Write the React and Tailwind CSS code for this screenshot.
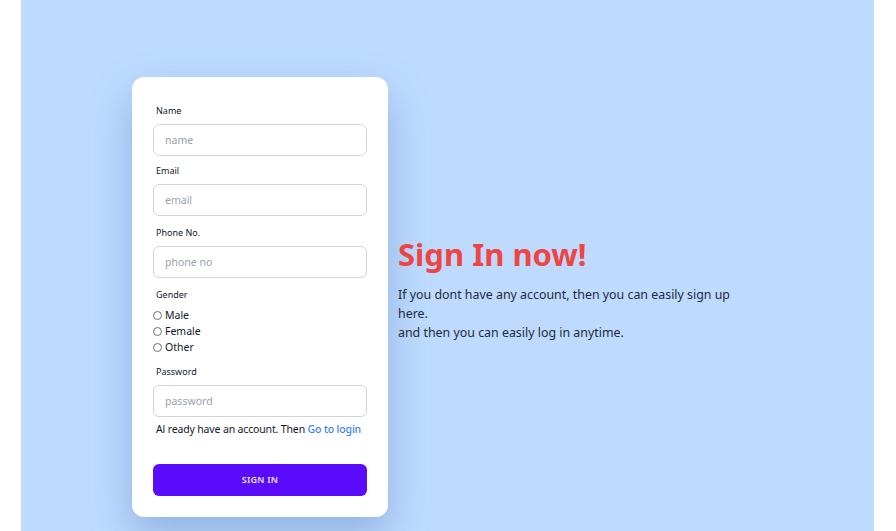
import React from "react";

function Field({ label, placeholder, type = "text" }) {
  return (
    <div className="flex flex-col">
      <label className="ml-[3px] text-[9px] leading-[12px] text-gray-900">{label}</label>
      <input
        type={type}
        placeholder={placeholder}
        className="mt-[7px] h-[32px] w-full rounded-md border border-gray-300 bg-white px-[11px] text-[10.5px] text-gray-800 placeholder:text-gray-400 outline-none"
      />
    </div>
  );
}

function Radio({ label }) {
  return (
    <label className="flex h-[16px] items-center gap-[3px] text-[10.5px] leading-[16px] text-gray-900">
      <span className="inline-block h-[9px] w-[9px] rounded-full border border-gray-500 bg-white" />
      {label}
    </label>
  );
}

export default function App() {
  return (
    <div className="flex w-full bg-white" style={{ fontFamily: '"Noto Sans", "Open Sans", sans-serif' }}>
      <div className="ml-[21px] flex h-[531px] w-[853px] items-start bg-[#bedbff] pl-[111px] pt-[77px]">
        <div className="flex w-[256px] flex-col rounded-xl bg-white px-[21px] pb-[21px] pt-[28px] shadow-[0_18px_40px_rgba(60,100,170,0.35)]">
          <Field label="Name" placeholder="name" />
          <div className="mt-[9px]">
            <Field label="Email" placeholder="email" />
          </div>
          <div className="mt-[11px]">
            <Field label="Phone No." placeholder="phone no" />
          </div>
          <div className="mt-[11px] flex flex-col">
            <span className="ml-[3px] text-[9px] leading-[12px] text-gray-900">Gender</span>
            <div className="mt-[6px] flex flex-col">
              <Radio label="Male" />
              <Radio label="Female" />
              <Radio label="Other" />
            </div>
          </div>
          <div className="mt-[11px]">
            <Field label="Password" placeholder="password" type="password" />
          </div>
          <p className="ml-[3px] mt-[4px] whitespace-nowrap text-[10.5px] leading-[16px] tracking-[-0.15px] text-gray-900">
            Al ready have an account. Then{" "}
            <a className="font-medium text-[#3b82f6]" href="#">Go to login</a>
          </p>
          <button className="mt-[27px] h-[32px] w-full rounded-md bg-[#5a0bfb] text-[9px] font-semibold tracking-wide text-[#e9e3ff]">
            SIGN IN
          </button>
        </div>
        <div className="ml-[10px] mt-[157px] flex w-[345px] flex-col">
          <h1 className="text-[31px] font-bold leading-[40px] text-[#ef4444]">Sign In now!</h1>
          <p className="mt-[11px] text-[12.4px] leading-[19px] text-gray-800">
            If you dont have any account, then you can easily sign up here.
            <br />
            and then you can easily log in anytime.
          </p>
        </div>
      </div>
    </div>
  );
}
